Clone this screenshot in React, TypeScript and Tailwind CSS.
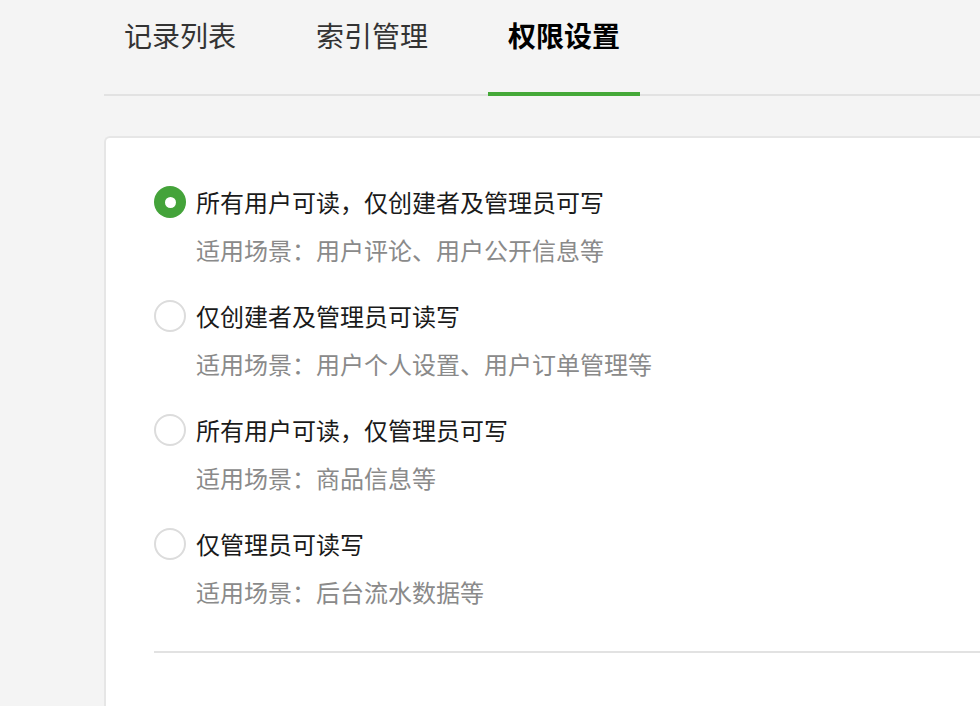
import React from "react";

const options = [
  { label: "所有用户可读，仅创建者及管理员可写", desc: "适用场景：用户评论、用户公开信息等" },
  { label: "仅创建者及管理员可读写", desc: "适用场景：用户个人设置、用户订单管理等" },
  { label: "所有用户可读，仅管理员可写", desc: "适用场景：商品信息等" },
  { label: "仅管理员可读写", desc: "适用场景：后台流水数据等" },
];

const tabs = ["记录列表", "索引管理", "权限设置"];

export default function App() {
  const active = 2;
  const selected = 0;
  return (
    <div
      className="w-[980px] h-[706px] overflow-hidden bg-[#f4f4f4] pl-[104px]"
      style={{ fontFamily: '"Noto Sans CJK SC", "Noto Sans", sans-serif' }}
    >
      {/* tabs */}
      <div className="flex gap-[40px] h-[96px] border-b-2 border-[#e2e2e2]">
        {tabs.map((t, i) => (
          <div
            key={t}
            className={
              "w-[152px] h-[96px] flex items-start justify-center pt-[14px] text-[28px] leading-[42px] border-b-4 -mb-[2px] " +
              (i === active ? "border-[#44a838] text-black font-bold" : "border-transparent text-[#333]")
            }
          >
            {t}
          </div>
        ))}
      </div>

      {/* card */}
      <div className="mt-[40px] bg-white border-2 border-[#e6e6e6] border-r-0 rounded-l-[6px] pl-[48px] pt-[43px] h-[640px]">
        <div className="flex flex-col gap-[24px]">
          {options.map((o, i) => (
            <div key={o.label} className="flex flex-col">
              <div className="flex items-center h-[42px]">
                {i === selected ? (
                  <span className="w-[32px] h-[32px] rounded-full bg-[#44a33a] flex items-center justify-center shrink-0">
                    <span className="w-[11px] h-[11px] rounded-full bg-white" />
                  </span>
                ) : (
                  <span className="w-[32px] h-[32px] rounded-full border-2 border-[#dcdcdc] bg-white shrink-0" />
                )}
                <span className="ml-[10px] text-[24px] text-[#1a1a1a] leading-[42px]">{o.label}</span>
              </div>
              <div className="pl-[42px] text-[24px] text-[#8a8a8a] leading-[42px] mt-[6px]">{o.desc}</div>
            </div>
          ))}
        </div>
        <div className="mt-[38px] h-[2px] bg-[#e2e2e2]" />
      </div>
    </div>
  );
}
